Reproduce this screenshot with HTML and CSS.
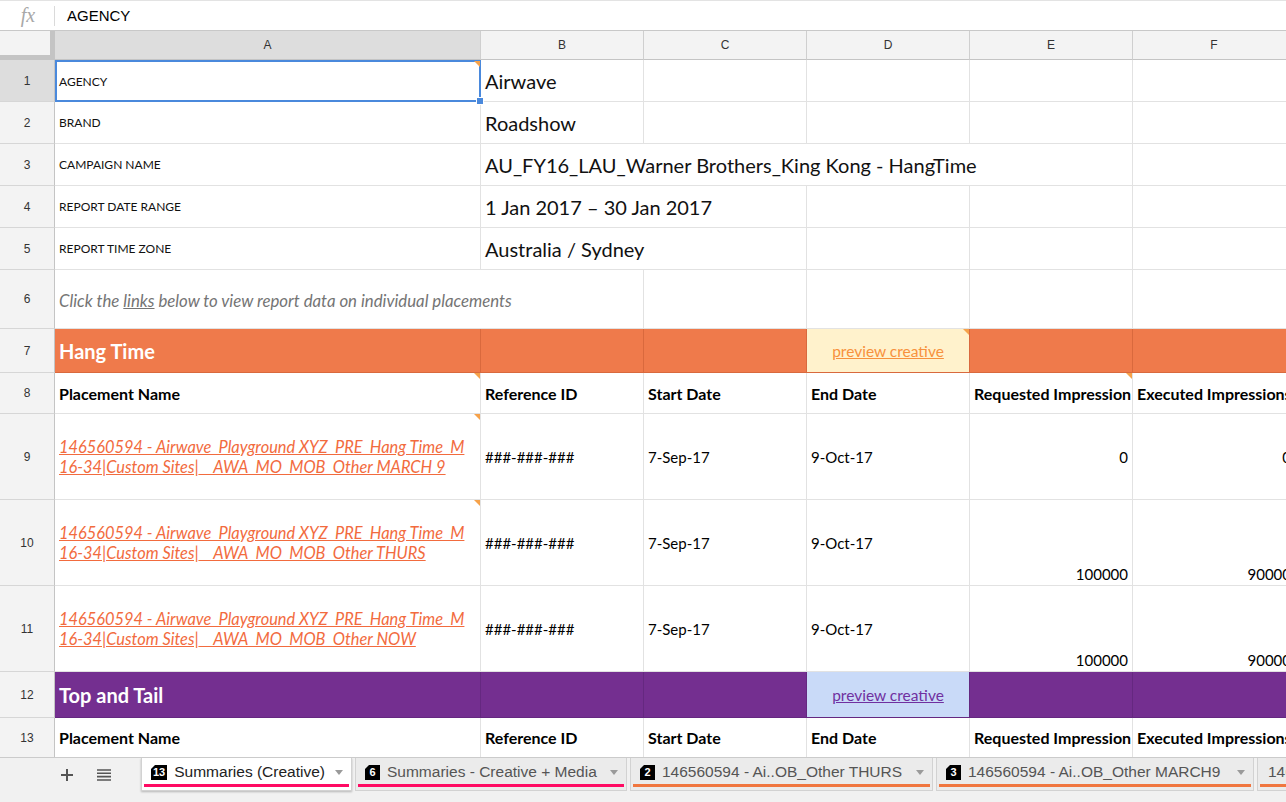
FILE: index.html
```html
<!DOCTYPE html>
<html>
<head>
<meta charset="utf-8">
<link rel="stylesheet" href="styles.css">
</head>
<body>
<div class="topline"></div>
<div class="formula">
  <span class="fx">fx</span>
  <span class="fsep"></span>
  <span class="ftext">AGENCY</span>
</div>
<div class="sheet">
  <div class="corner"></div>
  <div class="ch chsel">A</div><div class="ch">B</div><div class="ch">C</div><div class="ch">D</div><div class="ch">E</div><div class="ch">F</div>

  <div class="rh rhsel">1</div>
  <div class="c lab active">AGENCY<span class="note"></span><span class="handle"></span></div>
  <div class="c big">Airwave</div><div class="c"></div><div class="c"></div><div class="c"></div><div class="c"></div>

  <div class="rh">2</div>
  <div class="c lab">BRAND</div>
  <div class="c big">Roadshow</div><div class="c"></div><div class="c"></div><div class="c"></div><div class="c"></div>

  <div class="rh">3</div>
  <div class="c lab">CAMPAIGN NAME</div>
  <div class="c big span4">AU_FY16_LAU_Warner Brothers_King Kong - HangTime</div><div class="c"></div>

  <div class="rh">4</div>
  <div class="c lab">REPORT DATE RANGE</div>
  <div class="c big span2">1 Jan 2017 – 30 Jan 2017</div><div class="c"></div><div class="c"></div><div class="c"></div>

  <div class="rh">5</div>
  <div class="c lab">REPORT TIME ZONE</div>
  <div class="c big span2">Australia / Sydney</div><div class="c"></div><div class="c"></div><div class="c"></div>

  <div class="rh">6</div>
  <div class="c hint span2"><span>Click the <u>links</u> below to view report data on individual placements</span></div>
  <div class="c"></div><div class="c"></div><div class="c"></div><div class="c"></div>

  <div class="rh">7</div>
  <div class="c sec orange">Hang Time</div>
  <div class="c orange"></div><div class="c orange"></div>
  <div class="c preview yellow"><a>preview creative</a><span class="note"></span></div>
  <div class="c orange"></div><div class="c orange"></div>

  <div class="rh">8</div>
  <div class="c hd">Placement Name<span class="note"></span></div>
  <div class="c hd">Reference ID</div>
  <div class="c hd">Start Date</div>
  <div class="c hd">End Date</div>
  <div class="c hd">Requested Impression<span class="note"></span></div>
  <div class="c hd">Executed Impressions</div>

  <div class="rh">9</div>
  <div class="c link"><a>146560594 - Airwave_Playground XYZ_PRE_Hang Time_M<br>16-34|Custom Sites|__AWA_MO_MOB_Other MARCH 9</a><span class="note"></span></div>
  <div class="c dat">###-###-###</div>
  <div class="c dat">7-Sep-17</div>
  <div class="c dat">9-Oct-17</div>
  <div class="c dat num">0</div>
  <div class="c dat num">0</div>

  <div class="rh">10</div>
  <div class="c link"><a>146560594 - Airwave_Playground XYZ_PRE_Hang Time_M<br>16-34|Custom Sites|__AWA_MO_MOB_Other THURS</a><span class="note"></span></div>
  <div class="c dat">###-###-###</div>
  <div class="c dat">7-Sep-17</div>
  <div class="c dat">9-Oct-17</div>
  <div class="c dat num bot">100000</div>
  <div class="c dat num bot">90000</div>

  <div class="rh">11</div>
  <div class="c link"><a>146560594 - Airwave_Playground XYZ_PRE_Hang Time_M<br>16-34|Custom Sites|__AWA_MO_MOB_Other NOW</a></div>
  <div class="c dat">###-###-###</div>
  <div class="c dat">7-Sep-17</div>
  <div class="c dat">9-Oct-17</div>
  <div class="c dat num bot">100000</div>
  <div class="c dat num bot">90000</div>

  <div class="rh">12</div>
  <div class="c sec purple">Top and Tail</div>
  <div class="c purple"></div><div class="c purple"></div>
  <div class="c preview blue"><a>preview creative</a></div>
  <div class="c purple"></div><div class="c purple"></div>

  <div class="rh">13</div>
  <div class="c hd">Placement Name</div>
  <div class="c hd">Reference ID</div>
  <div class="c hd">Start Date</div>
  <div class="c hd">End Date</div>
  <div class="c hd">Requested Impression</div>
  <div class="c hd">Executed Impressions</div>
</div>

<div class="tabbar">
  <div class="tabctl">
    <svg class="ico plus" width="14" height="14" viewBox="0 0 14 14"><path d="M7 1v12M1 7h12" stroke="#555" stroke-width="2"/></svg>
    <svg class="ico menu" width="16" height="14" viewBox="0 0 16 14"><path d="M1 2h14M1 5.3h14M1 8.6h14M1 12h14" stroke="#555" stroke-width="1.6"/></svg>
  </div>
  <div class="tab active pink t1"><span class="badge">13</span><span class="tname">Summaries (Creative)</span><span class="caret"></span></div>
  <div class="tab pink t2"><span class="badge">6</span><span class="tname">Summaries - Creative + Media</span><span class="caret"></span></div>
  <div class="tab orng t3"><span class="badge">2</span><span class="tname">146560594 - Ai..OB_Other THURS</span><span class="caret"></span></div>
  <div class="tab orng t4"><span class="badge">3</span><span class="tname">146560594 - Ai..OB_Other MARCH9</span><span class="caret"></span></div>
  <div class="tab orng t5"><span class="tname">146560594</span></div>
</div>
</body>
</html>
```
FILE: styles.css
```css
html, body {
  margin: 0;
  padding: 0;
  width: 1286px;
  height: 802px;
  overflow: hidden;
  background: #ffffff;
  font-family: "Liberation Sans", Arial, sans-serif;
}

.topline {
  height: 0;
  border-top: 1px solid #e3e3e3;
}

.formula {
  height: 29px;
  border-bottom: 1px solid #c8c8c8;
  display: flex;
  align-items: center;
  background: #fff;
}
.fx {
  width: 54px;
  text-align: center;
  font-family: "Liberation Serif", serif;
  font-style: italic;
  font-size: 20px;
  color: #a8a8a8;
  padding-left: 2px;
  box-sizing: border-box;
}
.fsep {
  width: 1px;
  height: 20px;
  background: #dadada;
}
.ftext {
  padding-left: 12px;
  font-size: 15px;
  color: #000;
}

.sheet {
  display: grid;
  grid-template-columns: 55px 426px 163px 163px 163px 163px 163px;
  grid-template-rows: 29px 42px 42px 42px 42px 42px 59px 44px 41px 86px 86px 86px 46px 40px;
  height: 726px;
  width: 1286px;
  overflow: hidden;
}

.corner {
  background: #f3f3f3;
  border-right: 5px solid #c4c4c4;
  border-bottom: 5px solid #c4c4c4;
  box-sizing: border-box;
}
.ch {
  background: #f3f3f3;
  border-right: 1px solid #cfcfcf;
  border-bottom: 1px solid #c4c4c4;
  box-sizing: border-box;
  display: flex;
  align-items: center;
  justify-content: center;
  font-size: 12px;
  color: #333;
}
.chsel { background: #dddddd; }

.rh {
  background: #f3f3f3;
  border-right: 1px solid #c4c4c4;
  border-bottom: 1px solid #d6d6d6;
  box-sizing: border-box;
  display: flex;
  align-items: center;
  justify-content: center;
  font-size: 12px;
  color: #333;
}
.rhsel { background: #dddddd; }

.c {
  position: relative;
  border-right: 1px solid #e2e2e2;
  border-bottom: 1px solid #e2e2e2;
  box-sizing: border-box;
  display: flex;
  align-items: center;
  padding: 0 4px;
  white-space: nowrap;
  overflow: hidden;
  font-family: Lato, "Open Sans", sans-serif;
  color: #000;
}
.span2 { grid-column: span 2; }
.span4 { grid-column: span 4; }

.lab { font-size: 12px; color: #111; }
.big { font-size: 20px; color: #111; }
.hint {
  font-size: 16.8px;
  font-style: italic;
  color: #747474;
  padding-top: 3px;
}
.hint u { text-decoration-color: #747474; }

.active {
  border: 2px solid #4a89dc;
  padding-left: 2px;
  overflow: visible;
}
.handle {
  position: absolute;
  right: -5px;
  bottom: -5px;
  width: 6px;
  height: 6px;
  background: #4a89dc;
  border: 1px solid #fff;
  z-index: 3;
}
.note {
  position: absolute;
  top: 0;
  right: 0;
  width: 0;
  height: 0;
  border-top: 6px solid #f6a24a;
  border-left: 6px solid transparent;
}
.active .note { top: -1px; right: -1px; }

.orange {
  background: #ef7a4b;
  border-right-color: #d9693d;
  border-bottom-color: #d9693d;
}
.purple {
  background: #742f90;
  border-right-color: #652880;
  border-bottom-color: #652880;
}
.sec {
  font-size: 20px;
  font-weight: 700;
  color: #fff;
}
.preview {
  justify-content: center;
  font-size: 15.5px;
}
.preview a { text-decoration: underline; }
.yellow {
  background: #fff2cc;
  border-right-color: #d9693d;
  border-bottom-color: #d9693d;
}
.yellow a { color: #f7913d; }
.blue {
  background: #c9daf8;
  border-right-color: #652880;
  border-bottom-color: #652880;
}
.blue a { color: #7030a0; }

.hd {
  font-size: 16px;
  font-weight: 700;
}
.link {
  font-size: 16.4px;
  font-style: italic;
  line-height: 20px;
}
.link a {
  color: #f26b3e;
  text-decoration: underline;
}
.dat {
  font-size: 15px;
}
.num { justify-content: flex-end; }
.bot { align-items: flex-end; padding-bottom: 2px; }

.tabbar {
  height: 45px;
  background: #f1f1f1;
  border-top: 1px solid #cbcbcb;
  box-sizing: border-box;
  display: flex;
  align-items: flex-start;
  overflow: hidden;
}
.tabctl {
  width: 141px;
  flex: none;
  height: 34px;
  display: flex;
  align-items: center;
  padding-left: 60px;
  gap: 22px;
  box-sizing: border-box;
}
.tab {
  flex: none;
  position: relative;
  height: 33px;
  background: #ebebeb;
  border: 1px solid #d2d2d2;
  border-top: none;
  box-sizing: border-box;
  margin-right: 3px;
  display: flex;
  align-items: center;
  padding: 0 8px 4px 9px;
  font-size: 15.5px;
  color: #555;
  white-space: nowrap;
}
.tab.active {
  background: #fff;
  color: #222;
  box-shadow: 0 1px 2px rgba(0,0,0,0.25);
}
.tab::after {
  content: "";
  position: absolute;
  left: 2px;
  right: 2px;
  bottom: 3px;
  height: 3px;
}
.pink::after { background: #ff0a63; }
.orng::after { background: #f0763f; }
.t1 { width: 211px; }
.t2 { width: 272px; }
.t3 { width: 303px; }
.t4 { width: 318px; }
.t5 { width: 100px; padding-left: 10px; }

.badge {
  position: relative;
  display: inline-flex;
  align-items: center;
  justify-content: center;
  min-width: 15px;
  height: 15px;
  padding: 0 2px;
  box-sizing: border-box;
  background: #000;
  color: #fff;
  font-size: 11px;
  font-weight: 700;
  margin-right: 7px;
}
.badge::before {
  content: "";
  position: absolute;
  left: 0;
  top: 0;
  border-top: 4px solid #ebebeb;
  border-right: 4px solid transparent;
}
.active .badge::before { border-top-color: #fff; }
.tname { flex: 1; }
.caret {
  width: 0;
  height: 0;
  border-left: 4px solid transparent;
  border-right: 4px solid transparent;
  border-top: 5px solid #9a9a9a;
  margin-left: 8px;
}
```
